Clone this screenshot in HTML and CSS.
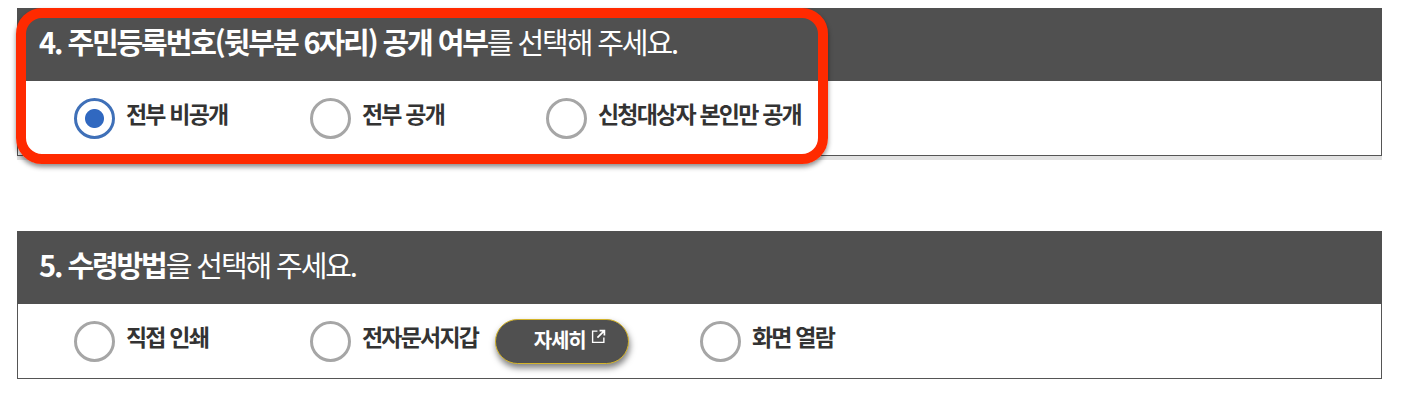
FILE: index.html
```html
<!DOCTYPE html>
<html lang="ko">
<head>
    <meta charset="UTF-8">
    <meta name="viewport" content="width=device-width, initial-scale=1.0">
    <title>수령방법 선택</title>
    <link rel="stylesheet" href="styles.css">
</head>
<body>
    <div class="page">
        <section class="panel panel-first">
            <h2 class="panel-title"><strong>4. 주민등록번호(뒷부분 6자리) 공개 여부</strong>를 선택해 주세요.</h2>
            <div class="options">
                <label class="option"><span class="radio checked"></span><span class="option-text">전부 비공개</span></label>
                <label class="option"><span class="radio"></span><span class="option-text">전부 공개</span></label>
                <label class="option"><span class="radio"></span><span class="option-text">신청대상자 본인만 공개</span></label>
            </div>
            <div class="highlight"></div>
        </section>

        <section class="panel">
            <h2 class="panel-title"><strong>5. 수령방법</strong>을 선택해 주세요.</h2>
            <div class="options">
                <label class="option"><span class="radio"></span><span class="option-text">직접 인쇄</span></label>
                <label class="option option-wide">
                    <span class="radio"></span><span class="option-text">전자문서지갑</span>
                    <a class="more-button">자세히
                        <svg class="more-icon" viewBox="0 0 14 14" fill="none" stroke="#fff">
                            <path d="M6 2H1.500V12.500H12V8" stroke-width="1.300"/>
                            <path d="M6 8L12.500 1.500M8 1.500H12.500V6" stroke-width="1.600"/>
                        </svg>
                    </a>
                </label>
                <label class="option"><span class="radio"></span><span class="option-text">화면 열람</span></label>
            </div>
        </section>
    </div>
</body>
</html>
```

FILE: styles.css
```css
*{
   margin: 0;
   padding: 0;
   box-sizing: border-box;
}

body{
   font-family: "Noto Sans CJK KR", "Noto Sans", sans-serif;
   background-color: white;
}

.page{
   width: 1365px;
   margin-left: 17px;
   padding-top: 8px;
}

.panel{
   position: relative;
   height: 148px;
   border: 1px solid #555;
   border-top: none;
   box-shadow: 0 4px 0 #e2e2e2;
}

.panel-first{
   margin-bottom: 75px;
}

.panel-title{
   height: 73px;
   margin: 0 -1px;
   padding: 13px 0 0 22px;
   background-color: #505050;
   color: white;
   font-size: 29px;
   line-height: 40px;
   font-weight: 400;
   letter-spacing: -2.100px;
}

.panel-title strong{
   font-weight: 700;
}

.options{
   display: flex;
   align-items: center;
   height: 74px;
   padding: 1px 0 0 56px;
}

.option{
   display: flex;
   align-items: center;
   width: 236px;
}

.option-wide{
   width: 390px;
}

.radio{
   width: 41px;
   height: 41px;
   flex-shrink: 0;
   border: 3px solid #a6a6a6;
   border-radius: 50%;
   background-color: white;
}

.radio.checked{
   border-color: #3f70b8;
   background: radial-gradient(circle, #3068c0 0 9px, white 10px);
}

.option-text{
   margin: 0 0 11px 11px;
   color: #333;
   font-size: 23px;
   font-weight: 700;
   letter-spacing: -1.800px;
   white-space: nowrap;
}

.more-button{
   display: flex;
   align-items: center;
   justify-content: center;
   gap: 6px;
   width: 134px;
   height: 45px;
   margin-left: 17px;
   padding: 0 0 5px 16px;
   border: 1px solid #d4b42a;
   border-radius: 23px;
   background-color: #505050;
   color: white;
   font-size: 20px;
   font-weight: 700;
   letter-spacing: -1.200px;
   box-shadow: 1px 4px 6px rgba(0, 0, 0, 0.5);
}

.more-icon{
   width: 15px;
   height: 15px;
   margin-bottom: 5px;
}

.highlight{
   position: absolute;
   top: 0;
   left: -2px;
   width: 812px;
   height: 156px;
   border: 10px solid #ff2a00;
   border-radius: 26px;
   box-shadow: 0 3px 5px rgba(0, 0, 0, 0.45);
}
```
